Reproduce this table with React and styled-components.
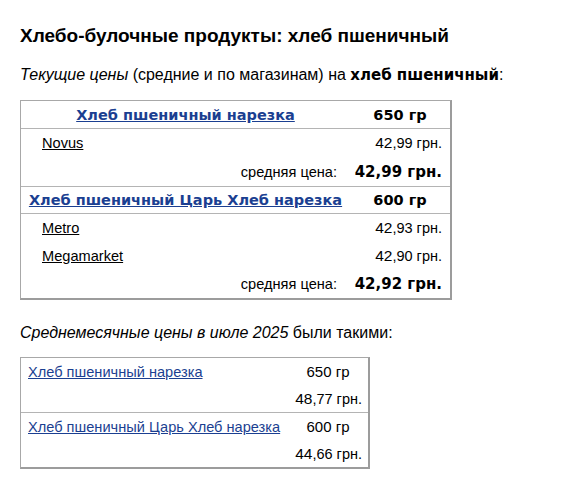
import React from "react";
import styled, { createGlobalStyle } from "styled-components";

const GlobalStyle = createGlobalStyle`
  body {
    margin: 0;
    background: #fff;
    color: #000;
    font-family: "Liberation Sans", Arial, sans-serif;
  }
`;

const Page = styled.div`
  padding: 25px 20px 10px 20px;
`;

const Title = styled.h1`
  margin: 0 0 18px 0;
  font-size: 19px;
  line-height: 22px;
  font-weight: bold;
`;

const Lead = styled.p`
  margin: 0 0 ${(p) => p.$gap}px 0;
  font-size: 16px;
  line-height: 20px;
`;

const Strong = styled.b`
  font-family: "DejaVu Sans", Verdana, sans-serif;
  font-size: 15px;
`;

const Box = styled.div`
  width: ${(p) => p.$w}px;
  box-sizing: border-box;
  border: 1px solid #a8a8a8;
  border-right: 2px solid #9c9c9c;
  border-bottom: 2px solid #9c9c9c;
  margin-bottom: ${(p) => p.$mb || 0}px;
`;

const Row = styled.div`
  display: grid;
  grid-template-columns: ${(p) => p.$cols};
  align-items: center;
  height: ${(p) => p.$h || 28}px;
  border-top: ${(p) => (p.$line ? "1px solid #b4b4b4" : "none")};
`;

const Cell = styled.div`
  text-align: ${(p) => p.$align || "left"};
  padding: 0 ${(p) => p.$pr || 0}px 0 ${(p) => p.$pl || 0}px;
  white-space: nowrap;
`;

const ProductLink = styled.a`
  color: #1b3f91;
  text-decoration: underline;
  font-family: ${(p) => (p.$bold ? '"DejaVu Sans", Verdana, sans-serif' : '"Liberation Sans", Arial, sans-serif')};
  font-weight: ${(p) => (p.$bold ? "bold" : "normal")};
  font-size: ${(p) => (p.$bold ? 14.5 : 14.6)}px;
`;

const Weight = styled.span`
  font-family: ${(p) => (p.$bold ? '"DejaVu Sans", Verdana, sans-serif' : '"Liberation Sans", Arial, sans-serif')};
  font-weight: ${(p) => (p.$bold ? "bold" : "normal")};
  font-size: ${(p) => (p.$bold ? 14.5 : 15)}px;
`;

const StoreLink = styled.a`
  color: #000;
  text-decoration: underline;
  font-size: 14.6px;
`;

const Price = styled.span`
  font-size: 14.5px;
  & > span {
    font-size: 15.5px;
  }
`;

const AvgLabel = styled.span`
  font-size: 14.6px;
`;

const AvgPrice = styled.b`
  font-family: "DejaVu Sans", Verdana, sans-serif;
  font-size: 15px;
`;

const cols1 = "329px 1fr";
const cols2 = "267px 1fr";

const current = [
  {
    name: "Хлеб пшеничный нарезка",
    weight: "650 гр",
    stores: [{ name: "Novus", price: ["42", ",99 грн."] }],
    avg: "42,99 грн.",
  },
  {
    name: "Хлеб пшеничный Царь Хлеб нарезка",
    weight: "600 гр",
    stores: [
      { name: "Metro", price: ["42", ",93 грн."] },
      { name: "Megamarket", price: ["42", ",90 грн."] },
    ],
    avg: "42,92 грн.",
  },
];

const monthly = [
  { name: "Хлеб пшеничный нарезка", weight: "650 гр", price: ["48", ",77 грн."] },
  { name: "Хлеб пшеничный Царь Хлеб нарезка", weight: "600 гр", price: ["44", ",66 грн."] },
];

export default function App() {
  return (
    <Page>
      <GlobalStyle />
      <Title>Хлебо-булочные продукты: хлеб пшеничный</Title>
      <Lead $gap={15}>
        <i>Текущие цены</i> (средние и по магазинам) на <Strong>хлеб пшеничный</Strong>:
      </Lead>
      <Box $w={432} $mb={23}>
        {current.map((p, i) => {
          const last = i === current.length - 1;
          return (
            <React.Fragment key={p.name}>
              <Row $cols={cols1} $line={i > 0} $h={i > 0 ? 26 : 27}>
                <Cell $align="center">
                  <ProductLink href="#" $bold>{p.name}</ProductLink>
                </Cell>
                <Cell $align="center">
                  <Weight $bold>{p.weight}</Weight>
                </Cell>
              </Row>
              {p.stores.map((s, j) => (
                <Row key={s.name} $cols={cols1} $line={j === 0}>
                  <Cell $pl={21}>
                    <StoreLink href="#">{s.name}</StoreLink>
                  </Cell>
                  <Cell $align="right" $pr={8}>
                    <Price>
                      <span>{s.price[0]}</span>
                      {s.price[1]}
                    </Price>
                  </Cell>
                </Row>
              ))}
              <Row $cols={cols1} $h={last ? 28 : 29}>
                <Cell $align="right" $pr={13}>
                  <AvgLabel>средняя цена:</AvgLabel>
                </Cell>
                <Cell $align="right" $pr={8}>
                  <AvgPrice>{p.avg}</AvgPrice>
                </Cell>
              </Row>
            </React.Fragment>
          );
        })}
      </Box>
      <Lead $gap={14}>
        <i>Среднемесячные цены в июле 2025</i> были такими:
      </Lead>
      <Box $w={350}>
        {monthly.map((p, i) => (
          <React.Fragment key={p.name}>
            <Row $cols={cols2} $line={i > 0} $h={27}>
              <Cell $pl={7}>
                <ProductLink href="#">{p.name}</ProductLink>
              </Cell>
              <Cell $align="center">
                <Weight>{p.weight}</Weight>
              </Cell>
            </Row>
            <Row $cols={cols2} $h={27}>
              <Cell />
              <Cell $align="right" $pr={6}>
                <Price>
                  <span>{p.price[0]}</span>
                  {p.price[1]}
                </Price>
              </Cell>
            </Row>
          </React.Fragment>
        ))}
      </Box>
    </Page>
  );
}
